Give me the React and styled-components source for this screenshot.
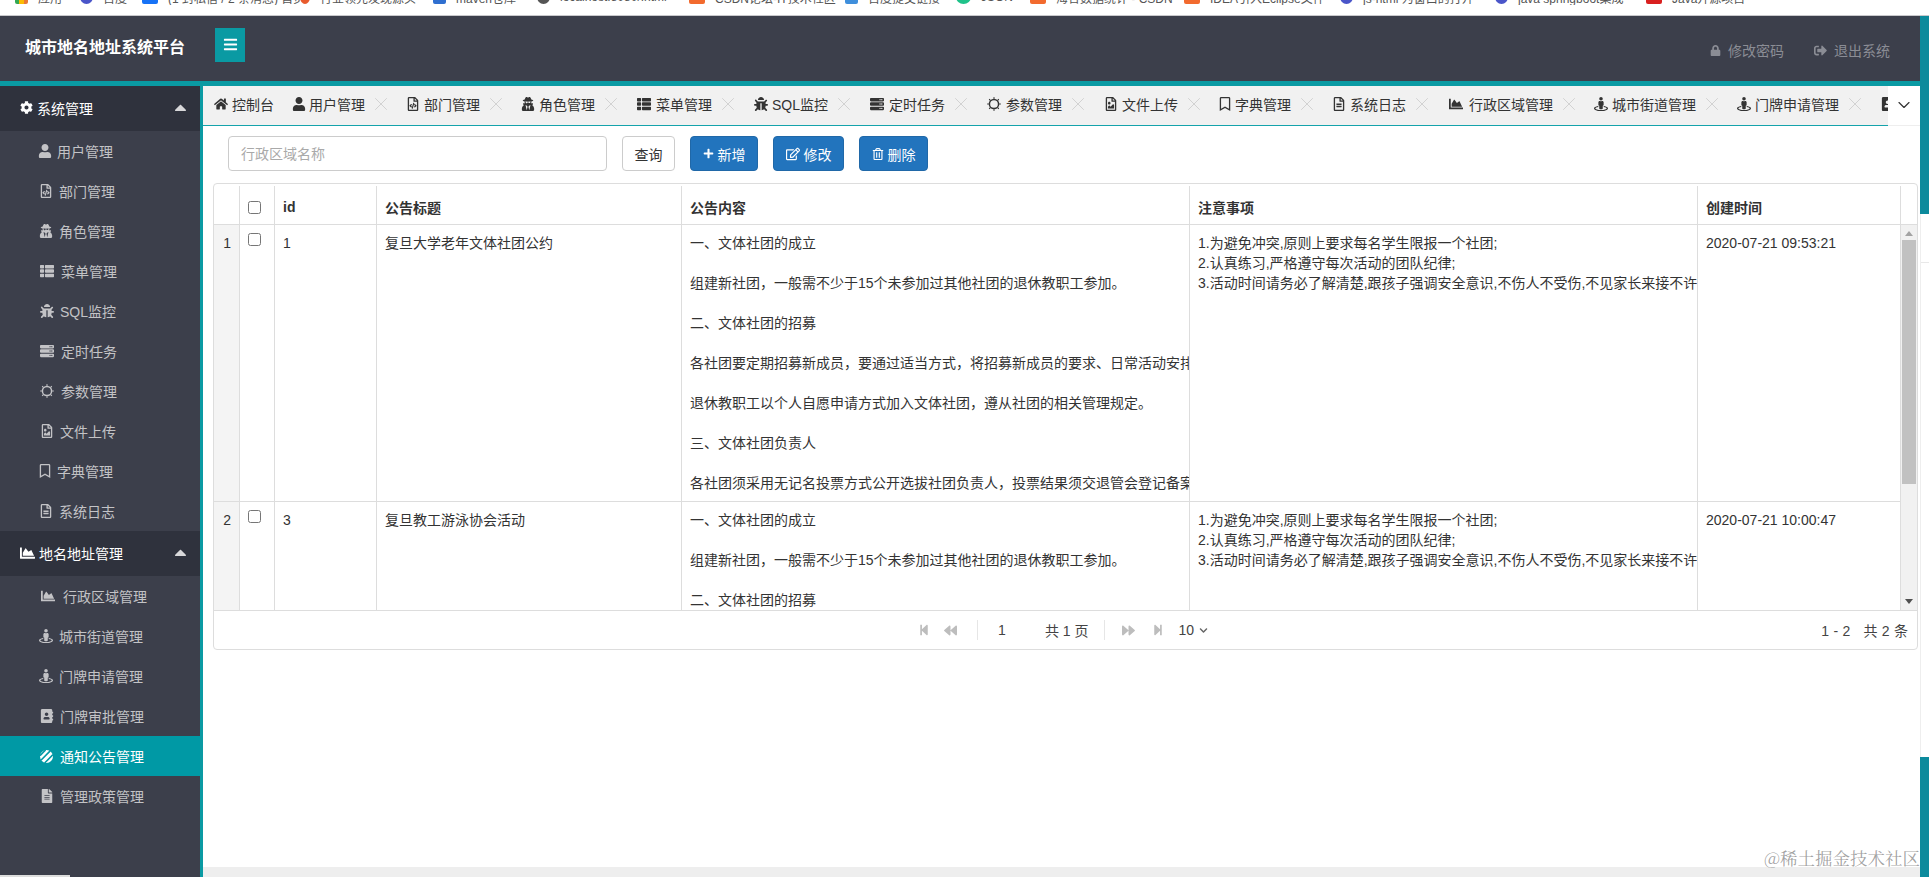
import React from "react";
import styled, { createGlobalStyle } from "styled-components";
import {
  FaAddressBook, FaBackward, FaBars, FaBug, FaCaretUp, FaChartArea, FaChevronDown, FaCog, FaFileAlt, FaForward, FaHome, FaLock, FaPlus,
  FaRegBookmark, FaRegEdit, FaRegFileAlt, FaRegFileCode, FaRegFileImage, FaRegTrashAlt, FaServer, FaSignOutAlt, FaStepBackward,
  FaStepForward, FaStreetView, FaThList, FaUser, FaUserSecret,
} from "react-icons/fa";
import { ChevronDown, X } from "lucide-react";

const TEAL = "#0a9aa3";
const DARK = "#3c3f4b";
const FONT = `"Liberation Sans", "Noto Sans CJK SC", sans-serif`;

const Global = createGlobalStyle`
  html, body { margin: 0; padding: 0; height: 100%; overflow: hidden; background: #fff; }
  body { font-family: ${FONT}; font-size: 14px; color: #333; }
  * { box-sizing: border-box; }
`;

const Page = styled.div`
  display: flex;
  flex-direction: column;
  width: 1929px;
  height: 877px;
`;
const BookmarkBar = styled.div`
  display: flex;
  flex: none;
  height: 16px;
  padding-left: 15px;
  overflow: hidden;
  background: #fff;
  border-bottom: 1px solid #c9c9cc;
`;
const Bookmark = styled.div`
  display: flex;
  flex: none;
  gap: 10px;
  align-items: center;
  width: ${(p) => p.$w}px;
  height: 16px;
  margin-top: -11px;
  padding-right: 20px;
  font-size: 12px;
  color: #555;
  white-space: nowrap;
  overflow: hidden;
`;
const BookmarkIcon = styled.span`
  flex: none;
  width: ${(p) => p.$size || 13}px;
  height: 14px;
  border-radius: ${(p) => (p.$square ? "2px" : "50%")};
  background: ${(p) => p.$color};
`;
const Main = styled.div`
  display: flex;
  flex: 1;
  min-height: 0;
`;
const Shell = styled.div`
  display: flex;
  flex-direction: column;
  width: 1920px;
`;
const EdgeStrip = styled.div`
  display: flex;
  flex-direction: column;
  width: 9px;
`;
const EdgeTeal = styled.div`
  flex: none;
  height: ${(p) => p.$h}px;
  background: #0c8a9c;
`;
const EdgeBlank = styled.div`
  flex: 1;
  padding-top: 48px;
  background: #fff;
  border-left: 1px solid #eee;
  &::before {
    content: "";
    display: block;
    height: 1px;
    background: #e8e8e8;
  }
`;
const Header = styled.header`
  display: flex;
  flex: none;
  align-items: center;
  height: 70px;
  padding: 0 30px 5px 25px;
  background: ${DARK};
  border-bottom: 5px solid ${TEAL};
`;
const Brand = styled.div`
  width: 190px;
  font-size: 16px;
  font-weight: 700;
  color: #fff;
`;
const MenuToggle = styled.button`
  display: flex;
  align-items: center;
  justify-content: center;
  width: 30px;
  height: 34px;
  margin-top: -3px;
  padding: 0;
  border: 0;
  color: #fff;
  font-size: 15px;
  background: ${TEAL};
`;
const HeaderLinks = styled.div`
  display: flex;
  gap: 30px;
  margin-left: auto;
  padding-top: 8px;
`;
const HeaderLink = styled.a`
  display: flex;
  gap: 7px;
  align-items: center;
  color: #8b8d95;
  font-size: 14px;
`;
const Body = styled.div`
  display: flex;
  flex: 1;
  min-height: 0;
`;
const Sidebar = styled.aside`
  display: flex;
  flex: none;
  flex-direction: column;
  width: 203px;
  background: ${DARK};
  border-right: 3px solid ${TEAL};
`;
const GroupTitle = styled.div`
  display: flex;
  flex: none;
  align-items: center;
  height: 45px;
  padding: 0 10px 2px 20px;
  color: #fff;
  background: #2f323d;
  & > svg:last-child {
    margin-left: auto;
    font-size: 19px;
    color: #d8d8da;
  }
`;
const GroupIcon = styled.span`
  display: flex;
  flex: none;
  justify-content: center;
  width: ${(p) => p.$w}px;
  margin-right: 4px;
  font-size: ${(p) => p.$size}px;
`;
const MenuItem = styled.a`
  display: flex;
  flex: none;
  gap: 7px;
  align-items: center;
  height: 40px;
  padding-left: 40px;
  color: ${(p) => (p.$active ? "#fff" : "#c3c3c6")};
  background: ${(p) => (p.$active ? "#0099a5" : "transparent")};
`;
const IconBox = styled.span`
  display: flex;
  flex: none;
  align-items: center;
  justify-content: center;
  width: ${(p) => p.$w}px;
  font-size: 14px;
  & > svg { flex: none; }
`;
const SideFoot = styled.div`
  width: 70px;
  height: 2px;
  margin-top: auto;
  background: #ddd;
`;
const Content = styled.main`
  position: relative;
  display: flex;
  flex: 1;
  flex-direction: column;
  min-width: 0;
`;
const TabRow = styled.div`
  display: flex;
  flex: none;
  height: 40px;
`;
const TabStrip = styled.div`
  display: flex;
  flex: 1;
  align-items: center;
  min-width: 0;
  padding: 0 0 3px 12px;
  overflow: hidden;
  background: #f1f1f1;
  border-bottom: 1px solid #14a3ab;
`;
const Tab = styled.a`
  display: flex;
  flex: none;
  align-items: center;
  gap: 5px;
  margin-right: ${(p) => (p.$plain ? 20 : 21)}px;
  color: #333;
  & > svg {
    margin: 0 -5.5px 0 -0.5px;
    color: #cfcfcf;
  }
`;
const TabToggle = styled.div`
  display: flex;
  flex: none;
  align-items: center;
  justify-content: center;
  width: 32px;
  padding-bottom: 2px;
  color: #333;
  background: #fff;
  border-bottom: 1px solid #eee;
`;
const Toolbar = styled.div`
  display: flex;
  flex: none;
  gap: 15px;
  height: 35px;
  margin: 10px 0 12px 25px;
`;
const SearchInput = styled.input`
  width: 379px;
  padding: 0 12px;
  font: 14px ${FONT};
  border: 1px solid #ccc;
  border-radius: 4px;
  &::placeholder { color: #a9a9a9; }
`;
const Button = styled.button`
  display: flex;
  gap: 4px;
  align-items: center;
  justify-content: center;
  width: ${(p) => p.$w}px;
  padding: 0;
  font: 14px ${FONT};
  color: ${(p) => (p.$primary ? "#fff" : "#333")};
  background: ${(p) => (p.$primary ? "#2274bd" : "#fff")};
  border: 1px solid ${(p) => (p.$primary ? "#2068a8" : "#ccc")};
  border-radius: 4px;
`;
const Table = styled.section`
  display: flex;
  flex-direction: column;
  width: 1705px;
  height: 467px;
  margin-left: 10px;
  border: 1px solid #ddd;
  border-radius: 4px;
  overflow: hidden;
`;
const COLUMNS = "26px 35px 102px 305px 508px 508px 203px";
const HeadRow = styled.div`
  display: flex;
  flex: none;
  height: 41px;
  padding-top: 2px;
  border-bottom: 1px solid #ddd;
`;
const RowGrid = styled.div`
  display: grid;
  flex: none;
  grid-template-columns: ${COLUMNS};
  width: 1687px;
`;
const HeadCell = styled.div`
  display: flex;
  align-items: center;
  padding: 4px 8px 0;
  font-weight: 700;
  border-right: 1px solid #ddd;
`;
const BodyWrap = styled.div`
  display: flex;
  flex: none;
  height: 385px;
`;
const Rows = styled.div`
  width: 1687px;
  overflow: hidden;
`;
const DataRow = styled(RowGrid)`
  border-bottom: 1px solid #ddd;
`;
const RowNumber = styled.div`
  padding: 8px 8px 0 0;
  line-height: 20px;
  text-align: right;
  background: #f4f4f4;
  border-right: 1px solid #ddd;
`;
const CheckCell = styled.div`
  display: flex;
  padding: 8px 8px 0;
  border-right: 1px solid #ddd;
`;
const Check = styled.input`
  width: 13px;
  height: 13px;
  margin: 0;
`;
const Cell = styled.div`
  padding: 8px;
  line-height: 20px;
  white-space: nowrap;
  overflow: hidden;
  border-right: 1px solid #ddd;
`;
const Para = styled.p`
  margin: 0 0 20px;
  &:last-child { margin-bottom: 0; }
`;
const NoteLine = styled.div``;
const Scrollbar = styled.div`
  display: flex;
  flex: none;
  flex-direction: column;
  align-items: center;
  width: 16px;
  background: #f1f1f1;
`;
const ScrollArrow = styled.div`
  flex: none;
  width: 0;
  height: 0;
  margin: ${(p) => (p.$down ? "auto 0 6px" : "6px 0 4px")};
  border-left: 4px solid transparent;
  border-right: 4px solid transparent;
  border-${(p) => (p.$down ? "top" : "bottom")}: 5px solid ${(p) => (p.$down ? "#505050" : "#a3a3a3")};
`;
const ScrollThumb = styled.div`
  flex: none;
  width: 14px;
  height: 244px;
  background: #c1c1c1;
`;
const Footer = styled.footer`
  display: grid;
  flex: 1;
  grid-template-columns: 1fr auto 1fr;
  align-items: center;
  padding: 0 9px 0 4px;
  border-top: 1px solid #ddd;
`;
const Pager = styled.div`
  grid-column: 2;
  display: flex;
  align-items: center;
  color: #444;
`;
const PagerIcon = styled.span`
  display: flex;
  width: ${(p) => p.$w}px;
  color: #bdbdbd;
  font-size: ${(p) => p.$size || 12}px;
`;
const PagerSep = styled.span`
  width: 1px;
  height: 20px;
  margin-right: ${(p) => p.$mr}px;
  background: #e6e6e6;
`;
const PageInput = styled.input`
  width: 53px;
  padding: 0 0 0 6px;
  border: 0;
  font: 14px ${FONT};
  color: #444;
  background: transparent;
`;
const PageCount = styled.span`
  margin-right: 15px;
`;
const PageSize = styled.span`
  display: flex;
  gap: 5px;
  align-items: center;
  margin-left: 15px;
  & > svg { font-size: 9px; color: #666; }
`;
const Total = styled.div`
  justify-self: end;
  word-spacing: 0.5px;
  color: #444;
  white-space: pre;
`;
const ScrollStrip = styled.div`
  position: absolute;
  right: 0;
  bottom: 0;
  left: 0;
  height: 10px;
  background: #eee;
`;
const Watermark = styled.div`
  position: absolute;
  right: 0;
  bottom: 7px;
  font: 17.5px "Noto Serif CJK SC", "Noto Sans CJK SC", sans-serif;
  color: rgba(110, 110, 110, 0.65);
  white-space: nowrap;
`;

const StripedCircle = () => (
  <svg width="13" height="13" viewBox="0 0 14 14">
    <circle cx="7" cy="7" r="7" fill="#fff" />
    <path d="M0 6 L6 0 M1 11 L11 1 M5 14 L14 5" stroke="#0099a5" strokeWidth="1.7" />
  </svg>
);

const SunOutline = () => (
  <svg width="14" height="14" viewBox="0 0 14 14" fill="none" stroke="currentColor">
    <circle cx="7" cy="7" r="4.6" strokeWidth="1.5" />
    <path d="M7 0.2v1.6M7 12.2v1.6M0.2 7h1.6M12.2 7h1.6M2.2 2.2l1.1 1.1M10.7 10.7l1.1 1.1M2.2 11.8l1.1-1.1M10.7 3.3l1.1-1.1" strokeWidth="1.2" />
  </svg>
);

const bookmarks = [
  { w: 65, color: "linear-gradient(90deg,#34a853 33%,#fbbc04 33% 66%,#ea7a35 66%)", label: "应用", square: true },
  { w: 62, color: "#4a55c9", label: "百度" },
  { w: 158, color: "#1772f6", label: "(1 封私信 / 2 条消息) 首页", square: true, size: 16 },
  { w: 133, color: "#e85a2c", label: "行业领先发现源头", size: 10 },
  { w: 104, color: "#2f6fd0", label: "maven仓库", square: true },
  { w: 152, color: "#555", label: "localhost:8080/.html" },
  { w: 156, color: "#f26a2e", label: "CSDN论坛-IT技术社区", square: true, size: 16 },
  { w: 111, color: "#3f8fdc", label: "百度提交链接", square: true },
  { w: 74, color: "#1fc28a", label: "JSON", size: 15 },
  { w: 154, color: "#f26a2e", label: "海合数据统计 - CSDN", square: true, size: 16 },
  { w: 156, color: "#f26a2e", label: "IDEA引入Eclipse文件", square: true, size: 16 },
  { w: 155, color: "#4a55c9", label: "js-html 为窗口的打开" },
  { w: 151, color: "#4a55c9", label: "java springboot集成" },
  { w: 100, color: "#d9201f", label: "Java开源项目", square: true, size: 16 },
];

const M = {
  user: { icon: FaUser, w: 10 },
  dept: { icon: FaRegFileCode, w: 12 },
  role: { icon: FaUserSecret, w: 12 },
  menu: { icon: FaThList, w: 14 },
  sql: { icon: FaBug, w: 13 },
  job: { icon: FaServer, w: 14 },
  param: { icon: SunOutline, w: 14 },
  file: { icon: FaRegFileImage, w: 13 },
  dict: { icon: FaRegBookmark, w: 10 },
  log: { icon: FaRegFileAlt, w: 12 },
  area: { icon: FaChartArea, w: 16 },
  street: { icon: FaStreetView, w: 12 },
  addr: { icon: FaAddressBook, w: 13 },
  notice: { icon: StripedCircle, w: 13 },
  policy: { icon: FaFileAlt, w: 13 },
};

const systemMenu = [
  [M.user, "用户管理"], [M.dept, "部门管理"], [M.role, "角色管理"], [M.menu, "菜单管理"], [M.sql, "SQL监控"],
  [M.job, "定时任务"], [M.param, "参数管理"], [M.file, "文件上传"], [M.dict, "字典管理"], [M.log, "系统日志"],
];
const addressMenu = [
  [M.area, "行政区域管理"], [M.street, "城市街道管理"], [M.street, "门牌申请管理"], [M.addr, "门牌审批管理"],
  [M.notice, "通知公告管理", true], [M.policy, "管理政策管理"],
];
const tabs = [...systemMenu, ...addressMenu.slice(0, 3)];

const paragraphs = [
  "一、文体社团的成立",
  "组建新社团，一般需不少于15个未参加过其他社团的退休教职工参加。",
  "二、文体社团的招募",
  "各社团要定期招募新成员，要通过适当方式，将招募新成员的要求、日常活动安排和联系方式告知退休教职工。",
  "退休教职工以个人自愿申请方式加入文体社团，遵从社团的相关管理规定。",
  "三、文体社团负责人",
  "各社团须采用无记名投票方式公开选拔社团负责人，投票结果须交退管会登记备案后方可生效。",
];
const notes = [
  "1.为避免冲突,原则上要求每名学生限报一个社团;",
  "2.认真练习,严格遵守每次活动的团队纪律;",
  "3.活动时间请务必了解清楚,跟孩子强调安全意识,不伤人不受伤,不见家长来接不许离开;",
];
const rows = [
  { n: 1, id: 1, title: "复旦大学老年文体社团公约", time: "2020-07-21 09:53:21" },
  { n: 2, id: 3, title: "复旦教工游泳协会活动", time: "2020-07-21 10:00:47" },
];

const Item = ({ entry }) => {
  const [meta, label, active] = entry;
  const Icon = meta.icon;
  return (
    <MenuItem $active={active}>
      <IconBox $w={meta.w}><Icon /></IconBox>
      {label}
    </MenuItem>
  );
};

export default function App() {
  return (
    <Page>
      <Global />
      <BookmarkBar>
        {bookmarks.map((b) => (
          <Bookmark key={b.label} $w={b.w}>
            <BookmarkIcon $color={b.color} $square={b.square} $size={b.size} />
            {b.label}
          </Bookmark>
        ))}
      </BookmarkBar>
      <Main>
        <Shell>
          <Header>
            <Brand>城市地名地址系统平台</Brand>
            <MenuToggle><FaBars /></MenuToggle>
            <HeaderLinks>
              <HeaderLink><FaLock size={11} />修改密码</HeaderLink>
              <HeaderLink><FaSignOutAlt size={13} />退出系统</HeaderLink>
            </HeaderLinks>
          </Header>
          <Body>
            <Sidebar>
              <GroupTitle>
                <GroupIcon $w={13} $size={13}><FaCog /></GroupIcon>
                系统管理
                <FaCaretUp />
              </GroupTitle>
              {systemMenu.map((e) => <Item key={e[1]} entry={e} />)}
              <GroupTitle>
                <GroupIcon $w={15} $size={16}><FaChartArea /></GroupIcon>
                地名地址管理
                <FaCaretUp />
              </GroupTitle>
              {addressMenu.map((e) => <Item key={e[1]} entry={e} />)}
              <SideFoot />
            </Sidebar>
            <Content>
              <TabRow>
                <TabStrip>
                  <Tab $plain>
                    <IconBox $w={12}><FaHome /></IconBox>
                    控制台
                  </Tab>
                  {tabs.map(([meta, label]) => {
                    const Icon = meta.icon;
                    return (
                      <Tab key={label}>
                        <IconBox $w={meta.w}><Icon /></IconBox>
                        {label}
                        <X size={22} strokeWidth={1} />
                      </Tab>
                    );
                  })}
                  <Tab $plain>
                    <IconBox $w={13}><FaAddressBook /></IconBox>
                    门牌审批管理
                  </Tab>
                </TabStrip>
                <TabToggle><ChevronDown size={20} strokeWidth={1.4} /></TabToggle>
              </TabRow>
              <Toolbar>
                <SearchInput placeholder="行政区域名称" />
                <Button $w={53}>查询</Button>
                <Button $primary $w={68}><FaPlus size={11} />新增</Button>
                <Button $primary $w={71}><FaRegEdit size={14} />修改</Button>
                <Button $primary $w={69}><FaRegTrashAlt size={12} />删除</Button>
              </Toolbar>
              <Table>
                <HeadRow>
                  <RowGrid>
                    <HeadCell />
                    <HeadCell><Check type="checkbox" /></HeadCell>
                    <HeadCell>id</HeadCell>
                    <HeadCell>公告标题</HeadCell>
                    <HeadCell>公告内容</HeadCell>
                    <HeadCell>注意事项</HeadCell>
                    <HeadCell>创建时间</HeadCell>
                  </RowGrid>
                </HeadRow>
                <BodyWrap>
                  <Rows>
                    {rows.map((r) => (
                      <DataRow key={r.n}>
                        <RowNumber>{r.n}</RowNumber>
                        <CheckCell><Check type="checkbox" /></CheckCell>
                        <Cell>{r.id}</Cell>
                        <Cell>{r.title}</Cell>
                        <Cell>
                          {paragraphs.map((p) => <Para key={p}>{p}</Para>)}
                        </Cell>
                        <Cell>
                          {notes.map((n) => <NoteLine key={n}>{n}</NoteLine>)}
                        </Cell>
                        <Cell>{r.time}</Cell>
                      </DataRow>
                    ))}
                  </Rows>
                  <Scrollbar>
                    <ScrollArrow />
                    <ScrollThumb />
                    <ScrollArrow $down />
                  </Scrollbar>
                </BodyWrap>
                <Footer>
                  <Pager>
                    <PagerIcon $w={26}><FaStepBackward /></PagerIcon>
                    <PagerIcon $w={33} $size={13}><FaBackward /></PagerIcon>
                    <PagerSep $mr={14} />
                    <PageInput defaultValue="1" />
                    <PageCount>共 1 页</PageCount>
                    <PagerSep $mr={17} />
                    <PagerIcon $w={30} $size={13}><FaForward /></PagerIcon>
                    <PagerIcon $w={12}><FaStepForward /></PagerIcon>
                    <PageSize>10<FaChevronDown /></PageSize>
                  </Pager>
                  <Total>{"1 - 2   共 2 条"}</Total>
                </Footer>
              </Table>
              <ScrollStrip />
              <Watermark>@稀土掘金技术社区</Watermark>
            </Content>
          </Body>
        </Shell>
        <EdgeStrip>
          <EdgeTeal $h={198} />
          <EdgeBlank />
          <EdgeTeal $h={120} />
        </EdgeStrip>
      </Main>
    </Page>
  );
}
